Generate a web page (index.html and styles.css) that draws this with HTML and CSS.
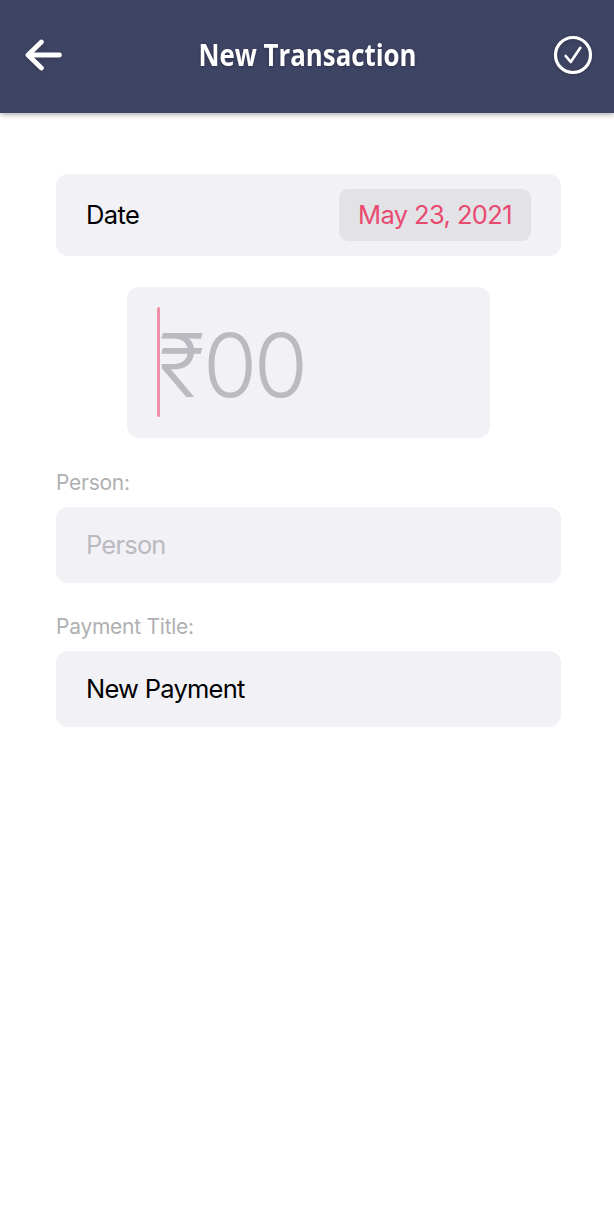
FILE: index.html
```html
<!DOCTYPE html>
<html lang="en">
<head>
<meta charset="utf-8">
<title>New Transaction</title>
<link rel="stylesheet" href="styles.css">
</head>
<body>
<header class="navbar">
  <svg class="back" viewBox="0 0 40 34" width="40" height="34"><path d="M17.4 4 4 17l13.4 13M5 17h30.5"/></svg>
  <h1 class="title">New Transaction</h1>
  <svg class="done" viewBox="0 0 40 40" width="40" height="40"><circle cx="20" cy="20" r="17.5"/><path class="tick" d="M12.7 21 17.7 27 27.3 12.8"/></svg>
</header>
<main class="form">
  <div class="field date-row"><span class="value">Date</span><span class="date-chip"><span class="value">May 23, 2021</span></span></div>
  <div class="amount"><span class="caret"></span><span class="rupee">₹</span><span class="digits">00</span></div>
  <label class="label">Person:</label>
  <div class="field placeholder"><span class="value">Person</span></div>
  <label class="label">Payment Title:</label>
  <div class="field"><span class="value payment">New Payment</span></div>
</main>
</body>
</html>
```
FILE: styles.css
```css
* { box-sizing: border-box; }
body { margin: 0; height: 1212px; background: #fff; font: 25.5px Inter, sans-serif; color: #000; letter-spacing: -.6px; }
.navbar { height: 113px; padding: 0 21px 3px 24px; display: flex; align-items: center; justify-content: space-between; background: #3e4464; box-shadow: 0 1px 6px rgba(0,0,0,.4); }
.navbar svg { fill: none; stroke: #fff; stroke-width: 3.2; stroke-linecap: round; stroke-linejoin: round; filter: drop-shadow(0 1px 2px rgba(0,0,0,.2)); }
.navbar .back { stroke-width: 4.8; }
.navbar .tick { stroke-width: 2.7; }
.title { margin: 0 -19px 0 -21px; padding-bottom: 1px; color: #fff; font: 700 29.5px "Open Sans", sans-serif; letter-spacing: 0; transform: scaleX(.875); text-shadow: 0 1px 4px rgba(0,0,0,.3); }
.form { padding: 61px 53px 0 56px; display: flex; flex-direction: column; }
.field { height: 76px; border-radius: 12px; background: #f2f1f6; padding: 0 30px 2px; display: flex; align-items: center; }
.date-row { height: 82px; padding-bottom: 0; justify-content: space-between; }
.date-row > .value { padding-bottom: 2px; }
.date-chip { width: 192px; height: 52px; padding-bottom: 2px; border-radius: 9px; background: #e3e2e7; color: #e84a70; display: flex; align-items: center; justify-content: center; }
.payment { letter-spacing: -.75px; }
.amount { width: 363px; height: 151px; margin: 31px 0 31px 71px; padding-left: 30px; border-radius: 12px; background: #f2f1f6; display: flex; align-items: center; color: #bbbac0; font-size: 88px; font-weight: 300; }
.caret { width: 3px; height: 110px; border-radius: 2px; background: #ee91a8; margin-bottom: 2px; }
.rupee { width: 44px; margin-left: -1px; padding-top: 5px; letter-spacing: 0; }
.digits { padding-top: 5px; letter-spacing: -3.5px; }
.label { height: 38px; font-size: 21px; line-height: 27px; letter-spacing: -.25px; color: #b0b0b2; }
.placeholder { color: #bbbac0; margin-bottom: 30px; letter-spacing: -.8px; }
```
